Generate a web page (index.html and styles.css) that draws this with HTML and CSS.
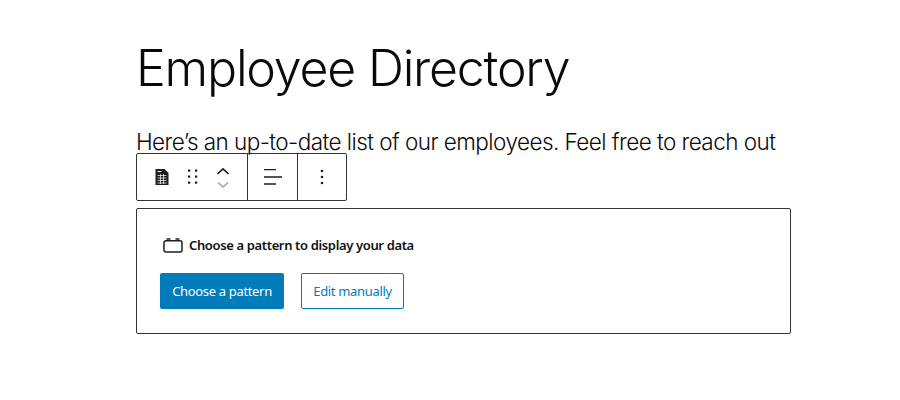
FILE: index.html
```html
<!DOCTYPE html>
<html lang="en">
<head>
<meta charset="utf-8">
<title>Employee Directory</title>
<link rel="stylesheet" href="styles.css">
</head>
<body>
<main class="editor">
  <h1 class="title">Employee Directory</h1>
  <p class="intro">Here’s an up-to-date list of our employees. Feel free to reach out</p>
  <div class="block-wrap">
    <div class="toolbar">
      <div class="group group-main">
        <svg class="icon-table" width="14" height="16" viewBox="0 0 14 16"><path d="M0.500 0h9l4 4v12h-13z" fill="#1e1e1e"/><path d="M2.500 6.500h9M2.500 9h9M2.500 11.500h9M2.500 14h9M5.500 5v10M8.500 5v10" stroke="#fff" stroke-width=".7" fill="none"/><path d="M2.500 2h4v1h-4z" fill="#fff"/></svg>
        <svg class="icon-drag" width="10" height="16" viewBox="0 0 10 16"><g fill="#1e1e1e"><rect x="0" y="0.500" width="2.200" height="2.200"/><rect x="7" y="0.500" width="2.200" height="2.200"/><rect x="0" y="6.500" width="2.200" height="2.200"/><rect x="7" y="6.500" width="2.200" height="2.200"/><rect x="0" y="12.500" width="2.200" height="2.200"/><rect x="7" y="12.500" width="2.200" height="2.200"/></g></svg>
        <div class="movers">
          <svg width="14" height="8" viewBox="0 0 14 8"><path d="M1.500 7 7 1.800 12.500 7" fill="none" stroke="#1e1e1e" stroke-width="1.700"/></svg>
          <svg width="14" height="8" viewBox="0 0 14 8"><path d="M2 1.500 7 6 12 1.500" fill="none" stroke="#a0a0a0" stroke-width="1.500"/></svg>
        </div>
      </div>
      <div class="group group-align">
        <svg width="18" height="16" viewBox="0 0 18 16"><path d="M0 1h12M0 8.500h18M0 15.500h12" fill="none" stroke="#1e1e1e" stroke-width="1.500" transform="translate(0 -.5)"/></svg>
      </div>
      <div class="group group-more">
        <svg width="4" height="16" viewBox="0 0 4 16"><g fill="#1e1e1e"><circle cx="2" cy="2" r="1.300"/><circle cx="2" cy="8" r="1.300"/><circle cx="2" cy="14" r="1.300"/></g></svg>
      </div>
    </div>
    <section class="placeholder">
      <div class="label">
        <svg width="20" height="15" viewBox="0 0 20 15"><path d="M3 2.800h14a2 2 0 0 1 2 2V12a2 2 0 0 1-2 2H3a2 2 0 0 1-2-2V4.800a2 2 0 0 1 2-2z" fill="none" stroke="#1e1e1e" stroke-width="1.500"/><path d="M3.500 1h4M12.500 1h4" stroke="#1e1e1e" stroke-width="1.500" fill="none"/></svg>
        <span>Choose a pattern to display your data</span>
      </div>
      <div class="actions">
        <button class="btn btn-primary" type="button">Choose a pattern</button>
        <button class="btn btn-secondary" type="button">Edit manually</button>
      </div>
    </section>
  </div>
</main>
</body>
</html>
```
FILE: styles.css
```css
* { box-sizing: border-box; }
html, body { margin: 0; height: 100%; background: #fff; overflow: hidden; }
.editor { width: 655px; margin-left: 136px; padding-top: 38px; font-family: "Inter", "Liberation Sans", sans-serif; color: #0a0a0a; }
.title { margin: 0; font-size: 50px; line-height: 60px; font-weight: 350; letter-spacing: -1.2px; white-space: nowrap; }
.intro { margin: 29px 0 0; font-size: 22.5px; line-height: 30px; font-weight: 350; letter-spacing: -0.55px; white-space: nowrap; }
.block-wrap { position: relative; margin-top: 51px; }
.toolbar { position: absolute; left: 0; top: -55px; height: 48px; display: flex; background: transparent; border: 1px solid #333; border-radius: 2px; }
.group { display: flex; align-items: center; height: 100%; }
.group + .group { border-left: 1px solid #333; }
.group-main { width: 110px; padding-left: 18px; }
.icon-drag { margin-left: 19px; }
.movers { display: flex; flex-direction: column; gap: 6px; margin-left: 18px; margin-top: 1px; }
.movers svg { display: block; }
.group-align { width: 50px; justify-content: center; }
.group-more { width: 49px; justify-content: center; }
.placeholder { height: 126px; padding: 27px 23px 0; border: 1px solid #333; border-radius: 2px; background: #fff; font-family: "Noto Sans", "Open Sans", sans-serif; letter-spacing: -0.33px; }
.label { display: flex; align-items: center; gap: 6px; margin-left: 3px; height: 18px; font-size: 13px; font-weight: 600; letter-spacing: -0.36px; color: #111; }
.actions { display: flex; gap: 17px; margin-top: 19px; }
.btn { height: 36px; padding: 0; border-radius: 2px; font-family: inherit; font-size: 13px; letter-spacing: -0.33px; }
.btn-primary { width: 124px; background: #007cba; border: 0; color: #fff; }
.btn-secondary { width: 103px; background: #fff; border: 1px solid #007cba; color: #007cba; }
```
